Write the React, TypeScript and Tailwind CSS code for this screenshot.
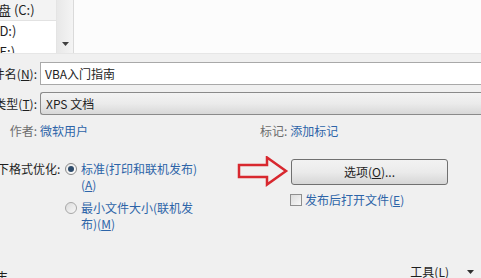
import React from "react";

const font = { fontFamily: '"Noto Sans CJK SC", "Liberation Sans", sans-serif' };

const App: React.FC = () => {
  return (
    <div
      className="w-[481px] h-[278px] bg-[#f0f0f0] overflow-hidden flex flex-col text-[12px] text-[#1e1e1e]"
      style={font}
    >
      {/* top browse pane */}
      <div className="flex h-[54px] shrink-0 border-b border-[#e6e6e6]">
        <div className="w-[56px] bg-white flex flex-col text-[13px] overflow-hidden">
          <div className="h-[21px] bg-[#f3f3f3] border-b border-[#e2e2e2] flex items-center -ml-[15px] whitespace-nowrap">
            磁盘 (C:)
          </div>
          <div className="h-[21px] flex items-center -ml-[5px] whitespace-nowrap">(D:)</div>
          <div className="h-[12px] overflow-hidden -ml-[5px] leading-[22px] whitespace-nowrap">(E:)</div>
        </div>
        <div className="w-[17px] bg-gradient-to-r from-[#e8e8e8] to-[#f4f4f4] border-l border-[#e4e4e4] flex flex-col justify-end items-center pb-[7px]">
          <svg width="7" height="4" viewBox="0 0 7 4">
            <path d="M0 0 L7 0 L3.5 4 Z" fill="#404040" />
          </svg>
        </div>
        <div className="w-[1px] bg-[#dadada]" />
        <div className="flex-1 bg-[#fcfcfc]" />
      </div>

      {/* file name */}
      <div className="flex items-center mt-[8px] h-[23px]">
        <div className="w-[40px] text-right pr-[3px] whitespace-nowrap flex justify-end">
          <span>
            件名(<span className="underline">N</span>):
          </span>
        </div>
        <div className="flex-1 h-[23px] bg-white border border-[#a9a9a9] border-r-0 flex items-center pl-[4px]">
          VBA入门指南
        </div>
      </div>

      {/* save type */}
      <div className="flex items-center mt-[7px] h-[23px]">
        <div className="w-[40px] text-right pr-[3px] whitespace-nowrap flex justify-end">
          <span>
            类型(<span className="underline">T</span>):
          </span>
        </div>
        <div className="flex-1 h-[23px] bg-gradient-to-b from-[#f3f3f3] via-[#ebebeb] to-[#d8d8d8] border border-[#8a8a8a] border-r-0 rounded-l-[3px] flex items-center pl-[5px]">
          XPS 文档
        </div>
      </div>

      {/* author / tags */}
      <div className="flex items-center h-[14px] mt-[9px]">
        <div className="w-[40px] text-right pr-[3px] text-[#6d6d6d]">作者:</div>
        <div className="w-[220px] text-[#2d64a8]">微软用户</div>
        <div className="text-[#6d6d6d] pr-[3px]">标记:</div>
        <div className="text-[#2d64a8]">添加标记</div>
      </div>

      {/* optimise */}
      <div className="flex mt-[22px]">
        <div className="w-[68px] -ml-[3px] text-[#1e1e1e] whitespace-nowrap leading-[16px] pt-[1px]">下格式优化:</div>
        <div className="flex flex-col w-[172px]">
          <div className="flex">
            <div className="w-[15px] h-[17px] flex items-center pt-[1px]">
              <div className="w-[12px] h-[12px] rounded-full border border-[#8a8a8a] bg-gradient-to-br from-[#e8e8e8] to-white flex items-center justify-center">
                <div className="w-[6px] h-[6px] rounded-full bg-[#2c4a6a]" />
              </div>
            </div>
            <div className="pl-[1px] text-[#2d64a8] leading-[16px] pt-[1px]">
              标准(打印和联机发布)
              <br />
              (<span className="underline">A</span>)
            </div>
          </div>
          <div className="flex mt-[6px]">
            <div className="w-[15px] h-[17px] flex items-center pt-[1px]">
              <div className="w-[12px] h-[12px] rounded-full border border-[#a8a8a8] bg-gradient-to-br from-[#dcdcdc] to-[#f8f8f8]" />
            </div>
            <div className="pl-[1px] text-[#2d64a8] leading-[16px] pt-[1px]">
              最小文件大小(联机发
              <br />
              布)(<span className="underline">M</span>)
            </div>
          </div>
        </div>
        <div className="flex flex-col -mt-[4px]">
          <div className="flex items-center">
            <svg width="52" height="32" viewBox="0 0 52 32" className="mr-[2px]">
              <path
                d="M2 9 L30 9 L30 1.5 L49 15 L30 28.5 L30 21 L2 21 Z"
                fill="none"
                stroke="#d8282f"
                strokeWidth="2.5"
                strokeLinejoin="miter"
              />
            </svg>
            <div className="w-[157px] h-[26px] rounded-[3px] border border-[#707070] bg-gradient-to-b from-[#f2f2f2] via-[#ebebeb] to-[#d6d6d6] flex items-center justify-center">
              选项(<span className="underline">O</span>)...
            </div>
          </div>
          <div className="flex items-center mt-[3px] ml-[53px]">
            <div className="w-[12px] h-[12px] border border-[#8f8f8f] bg-gradient-to-br from-[#dcdcdc] to-[#f8f8f8]" />
            <div className="pl-[3px] text-[#2d64a8]">
              发布后打开文件(<span className="underline">E</span>)
            </div>
          </div>
        </div>
      </div>

      {/* bottom bar */}
      <div className="flex-1 flex items-end">
        <div className="flex-1 h-[9px] overflow-hidden -ml-[4px] leading-[16px]">丰</div>
        <div className="flex items-center h-[16px] -mb-[2px] pr-[7px]">
          <span>
            工具(<span className="underline">L</span>)
          </span>
          <svg width="7" height="4" viewBox="0 0 7 4" className="ml-[18px]">
            <path d="M0 0 L7 0 L3.5 4 Z" fill="#303030" />
          </svg>
        </div>
      </div>
    </div>
  );
};

export default App;
